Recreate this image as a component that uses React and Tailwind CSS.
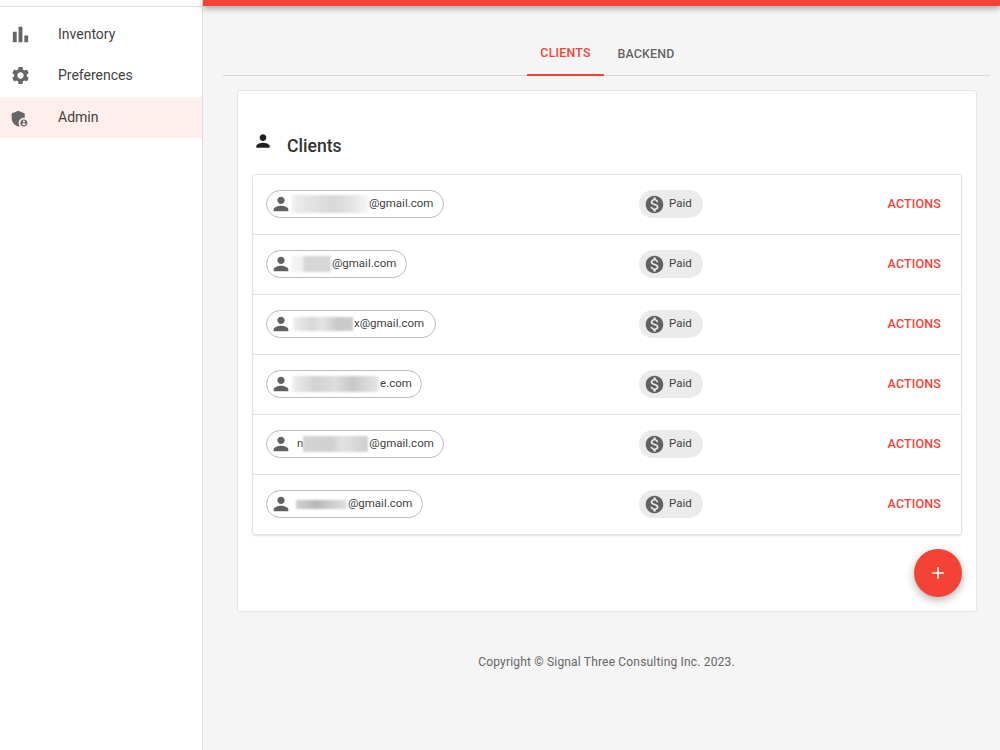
import React from "react";
import {
  MdBarChart,
  MdSettings,
  MdAdminPanelSettings,
  MdPerson,
  MdMonetizationOn,
  MdAdd,
} from "react-icons/md";

const clients = [
  {
    mask: "ml-0 w-[76px] h-[18px] bg-[linear-gradient(90deg,#f1f1f1_0%,#e4e4e4_20%,#d8d8d8_55%,#e6e6e6_80%,#f4f4f4_100%)]",
    email: "@gmail.com",
    pad: "pr-[10px]",
  },
  {
    mask: "ml-0 w-[39px] h-[16px] bg-[linear-gradient(90deg,#f3f3f3_0%,#f0f0f0_25%,#d6d6d6_35%,#d8d8d8_100%)]",
    email: "@gmail.com",
    pad: "pr-[10px]",
  },
  {
    mask: "ml-[1px] w-[60px] h-[14px] bg-[linear-gradient(90deg,#eeeeee_0%,#d8d8d8_30%,#e4e4e4_50%,#c8c8c8_75%,#cccccc_100%)]",
    email: "x@gmail.com",
    pad: "pr-[11px]",
  },
  {
    mask: "ml-0 w-[87px] h-[16px] bg-[linear-gradient(90deg,#f0f0f0_0%,#d2d2d2_25%,#dcdcdc_50%,#c8c8c8_70%,#e8e8e8_100%)]",
    email: "e.com",
    pad: "pr-[9px]",
  },
  {
    lead: "n",
    mask: "ml-0 w-[65px] h-[16px] bg-[linear-gradient(90deg,#d4d4d4_0%,#d0d0d0_45%,#e2e2e2_60%,#cfcfcf_100%)]",
    email: "@gmail.com",
    pad: "pr-[9px]",
  },
  {
    mask: "ml-[4px] w-[51px] h-[9px] bg-[linear-gradient(90deg,#d0d0d0_0%,#b8b8b8_40%,#cccccc_70%,#e0e0e0_100%)]",
    email: "@gmail.com",
    pad: "pr-[10px]",
  },
];

const navItems = [
  { label: "Inventory", Icon: MdBarChart, size: "text-[23px] ml-[8.5px] mr-[26.5px]" },
  { label: "Preferences", Icon: MdSettings, size: "text-[21px] ml-[9.5px] mr-[27.5px]" },
  { label: "Admin", Icon: MdAdminPanelSettings, size: "text-[21px] ml-[9px] mr-[28px] mt-[1px]", active: true },
];

const ClientRow = ({ client, last }) => (
  <div
    className={`flex items-start pt-[15px] pl-[13px] pr-[20px] ${
      last ? "h-[59px]" : "h-[60px] border-b border-[#e4e4e4]"
    }`}
  >
    <div className="w-[373px] flex">
      <div className={`flex items-center h-[28px] pl-[3px] rounded-full border border-[#bdbdbd] bg-white ${client.pad}`}>
        <MdPerson className="text-[#616161] text-[22px]" />
        {client.lead && (
          <span className="text-[11.5px] text-[#424242] pl-[5px]">{client.lead}</span>
        )}
        <span className={`blur-[0.8px] ${client.mask}`} />
        <span className="text-[11.5px] text-[#424242] ml-[1px]">{client.email}</span>
      </div>
    </div>
    <div className="flex items-center h-[28px] w-[64px] pl-[5px] rounded-full bg-[#ebebeb]">
      <MdMonetizationOn className="text-[#616161] text-[21px] mr-[4px]" />
      <span className="text-[11.5px] text-[#424242]">Paid</span>
    </div>
    <button className="ml-auto h-[28px] text-[12.5px] font-medium tracking-[0.15px] text-[#f44336]">
      ACTIONS
    </button>
  </div>
);

export default function App() {
  return (
    <div className="flex h-screen overflow-hidden bg-[#f5f5f5] font-['Roboto',sans-serif]">
      <aside className="w-[203px] shrink-0 bg-white border-r border-[#e0e0e0]">
        <div className="h-[7px] border-b border-[#e0e0e0]" />
        <nav className="pt-[7px]">
          {navItems.map(({ label, Icon, size, active }) => (
            <div
              key={label}
              className={`flex items-center h-[41px] ${
                active ? "bg-[#feeeec] mt-[1px]" : ""
              }`}
            >
              <Icon className={`text-[#666666] shrink-0 ${size}`} />
              <span className="text-[14px] text-[#424242]">{label}</span>
            </div>
          ))}
        </nav>
      </aside>

      <main className="flex-1 min-w-0">
        <div className="h-[6px] bg-[#f44336] shadow-[0_2px_6px_rgba(0,0,0,0.4)]" />

        <div className="mt-[26px] ml-[20px] mr-[10px] flex justify-center border-b border-[#d8d8d8] h-[44px] text-[12.4px] font-medium tracking-[0.2px]">
          <div className="ml-[2px] w-[77px] h-[44px] flex items-center justify-center text-[#f44336] border-b-2 border-[#f44336]">
            CLIENTS
          </div>
          <div className="w-[84px] h-[44px] flex items-center justify-center text-[#666666]">
            BACKEND
          </div>
        </div>

        <section className="mt-[14px] ml-[34px] mr-[23px] h-[522px] bg-white border border-[#e4e4e4] rounded-[3px] px-[14px]">
          <div className="flex h-[83px] pt-[40px]">
            <MdPerson className="text-[#212121] text-[20px] ml-[1px] mr-[14px]" />
            <h2 className="text-[17.6px] font-medium text-[#333333] mt-[3px] leading-[24px]">
              Clients
            </h2>
          </div>

          <div className="border border-[#e4e4e4] rounded-[3px] shadow-[0_1px_2px_rgba(0,0,0,0.12)]">
            {clients.map((client, i) => (
              <ClientRow key={i} client={client} last={i === clients.length - 1} />
            ))}
          </div>

          <div className="flex justify-end mt-[14px]">
            <button className="flex items-center justify-center w-[48px] h-[48px] rounded-full bg-[#f44336] text-white shadow-[0_3px_8px_rgba(0,0,0,0.3)]">
              <MdAdd className="text-[20px]" />
            </button>
          </div>
        </section>

        <footer className="mt-[41px] text-center text-[12px] tracking-[0.18px] text-[#666666] ml-[10px]">
          Copyright © Signal Three Consulting Inc. 2023.
        </footer>
      </main>
    </div>
  );
}
